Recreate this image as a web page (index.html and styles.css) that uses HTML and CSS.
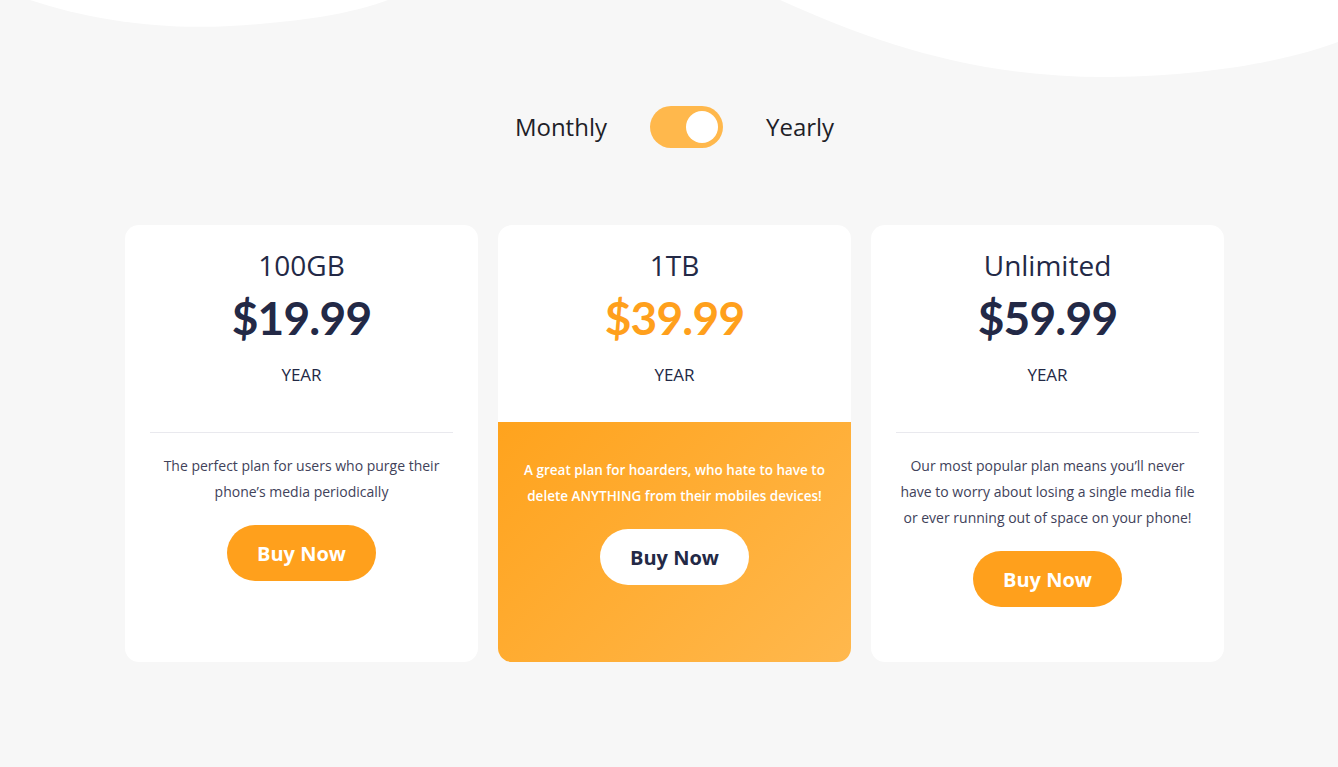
FILE: index.html
```html
<!DOCTYPE html>
<html>
<head>
<meta charset="utf-8">
<link rel="stylesheet" href="styles.css">
</head>
<body>
<div class="page">
  <svg class="waves" width="1338" height="90" viewBox="0 0 1338 90" aria-hidden="true">
    <path d="M30 0 C90 20 160 30 230 26 C300 22 350 14 388 0 Z" fill="#ffffff"/>
    <path d="M780 0 C880 45 980 78 1110 77 C1210 76 1290 60 1338 42 L1338 0 Z" fill="#ffffff"/>
  </svg>
  <div class="switcher">
    <span class="switch-label">Monthly</span>
    <span class="toggle"><span class="knob"></span></span>
    <span class="switch-label">Yearly</span>
  </div>
  <div class="cards">
    <div class="card">
      <div class="card-top">
        <div class="plan">100GB</div>
        <div class="price">$19.99</div>
        <div class="period">YEAR</div>
      </div>
      <div class="card-bottom">
        <div class="divider"></div>
        <p class="desc">The perfect plan for users who purge their phone’s media periodically</p>
        <a class="btn">Buy Now</a>
      </div>
    </div>
    <div class="card featured">
      <div class="card-top">
        <div class="plan">1TB</div>
        <div class="price">$39.99</div>
        <div class="period">YEAR</div>
      </div>
      <div class="card-bottom">
        <p class="desc">A great plan for hoarders, who hate to have to delete ANYTHING from their mobiles devices!</p>
        <a class="btn">Buy Now</a>
      </div>
    </div>
    <div class="card">
      <div class="card-top">
        <div class="plan">Unlimited</div>
        <div class="price">$59.99</div>
        <div class="period">YEAR</div>
      </div>
      <div class="card-bottom">
        <div class="divider"></div>
        <p class="desc">Our most popular plan means you’ll never have to worry about losing a single media file or ever running out of space on your phone!</p>
        <a class="btn">Buy Now</a>
      </div>
    </div>
  </div>
</div>
</body>
</html>
```
FILE: styles.css
```css
* { box-sizing: border-box; }
html, body { margin: 0; padding: 0; }
body {
  background: #f7f7f7;
  font-family: "Open Sans", "Noto Sans", sans-serif;
  color: #232946;
  width: 1338px;
  height: 767px;
  overflow: hidden;
}
.page {
  position: relative;
  height: 767px;
  padding-top: 104px;
}
.waves {
  position: absolute;
  top: 0;
  left: 0;
}
.switcher {
  position: relative;
  display: flex;
  justify-content: center;
  align-items: center;
  gap: 43px;
  height: 46px;
  padding-left: 11px;
}
.switch-label {
  font-size: 24px;
  line-height: 44px;
  color: #1f1f28;
}
.toggle {
  display: flex;
  align-items: center;
  justify-content: flex-end;
  width: 73px;
  height: 42px;
  border-radius: 21px;
  background: #ffb84c;
  padding: 5px;
}
.knob {
  width: 32px;
  height: 32px;
  border-radius: 50%;
  background: #ffffff;
}
.cards {
  display: flex;
  justify-content: center;
  gap: 20px;
  margin-top: 75px;
  padding-left: 11px;
}
.card {
  width: 353px;
  height: 437px;
  background: #ffffff;
  border-radius: 14px;
  overflow: hidden;
  display: flex;
  flex-direction: column;
  text-align: center;
  flex-shrink: 0;
}
.card-top {
  height: 197px;
  padding-top: 22px;
}
.plan {
  font-size: 28px;
  line-height: 36px;
  color: #232946;
}
.price {
  font-family: "Lato", sans-serif;
  font-weight: 700;
  font-size: 46px;
  line-height: 56px;
  margin-top: 7px;
  color: #232946;
  letter-spacing: -0.8px;
}
.featured .price { color: #ffa01c; }
.period {
  font-size: 17px;
  line-height: 24px;
  margin-top: 17px;
  color: #232946;
}
.card-bottom {
  flex: 1;
  display: flex;
  flex-direction: column;
  align-items: center;
  padding: 10px 25px 0;
}
.divider {
  width: 100%;
  height: 1px;
  background: #e9e9ee;
}
.desc {
  margin: 20px 0 0;
  font-size: 14px;
  line-height: 26px;
  color: #41425a;
  padding: 0;
}
.btn {
  margin-top: 20px;
  width: 149px;
  height: 56px;
  border-radius: 28px;
  background: #ffa01c;
  color: #ffffff;
  font-weight: 700;
  font-size: 20px;
  display: flex;
  align-items: center;
  justify-content: center;
}
.featured .card-bottom {
  background: linear-gradient(135deg, #ffa31d 0%, #ffb84d 100%);
  padding-top: 35px;
}
.featured .desc {
  color: #ffffff;
  font-weight: 600;
  font-size: 13.5px;
  margin-top: 0;
  padding: 0;
}
.featured .btn {
  background: #ffffff;
  color: #232946;
}
```
